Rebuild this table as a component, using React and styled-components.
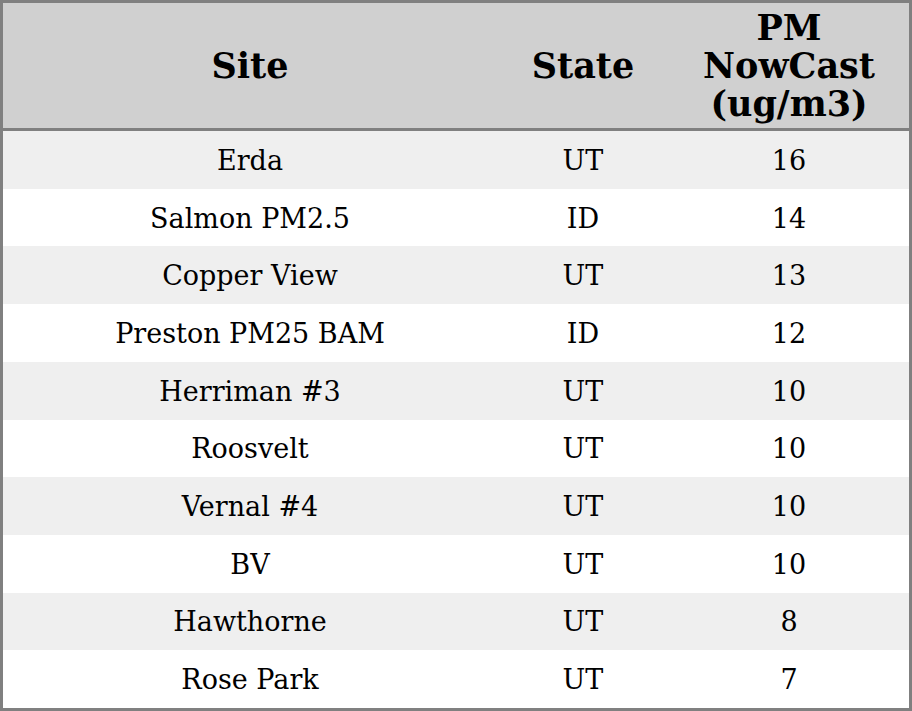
import styled, {createGlobalStyle} from 'styled-components';

const GlobalStyle = createGlobalStyle`
    html, body {
        margin: 0;
        padding: 0;
        background: #ffffff;
    }
`;

const rows = [
    {site: 'Erda', state: 'UT', value: 16},
    {site: 'Salmon PM2.5', state: 'ID', value: 14},
    {site: 'Copper View', state: 'UT', value: 13},
    {site: 'Preston PM25 BAM', state: 'ID', value: 12},
    {site: 'Herriman #3', state: 'UT', value: 10},
    {site: 'Roosvelt', state: 'UT', value: 10},
    {site: 'Vernal #4', state: 'UT', value: 10},
    {site: 'BV', state: 'UT', value: 10},
    {site: 'Hawthorne', state: 'UT', value: 8},
    {site: 'Rose Park', state: 'UT', value: 7},
];

const Table = styled.div`
    box-sizing: border-box;
    width: 912px;
    height: 711px;
    border: 3px solid #808080;
    display: flex;
    flex-direction: column;
    font-family: "DejaVu Serif", serif;
    color: #000;
`;

const Columns = `
    display: grid;
    grid-template-columns: 494px 172px 240px;
`;

const HeadRow = styled.div`
    ${Columns};
    height: 125px;
    background: #d0d0d0;
    border-bottom: 3px solid #808080;
`;

const HeadCell = styled.div`
    display: flex;
    align-items: center;
    justify-content: center;
    text-align: center;
    font-weight: bold;
    font-size: 35px;
    line-height: 38px;
    padding-top: 1px;
`;

const Body = styled.div`
    flex: 1;
    display: grid;
    grid-template-rows: repeat(10, 1fr);
`;

const Row = styled.div`
    ${Columns};
    background: ${({$odd}) => ($odd ? '#efefef' : '#ffffff')};
`;

const Cell = styled.div`
    display: flex;
    align-items: center;
    justify-content: center;
    font-size: 27px;
    padding-top: 1px;
`;

export default function App() {
    return (
        <>
            <GlobalStyle/>
            <Table>
                <HeadRow>
                    <HeadCell>Site</HeadCell>
                    <HeadCell>State</HeadCell>
                    <HeadCell>PM<br/>NowCast<br/>(ug/m3)</HeadCell>
                </HeadRow>
                <Body>
                    {rows.map((r, i) => (
                        <Row key={r.site} $odd={i % 2 === 0}>
                            <Cell>{r.site}</Cell>
                            <Cell>{r.state}</Cell>
                            <Cell>{r.value}</Cell>
                        </Row>
                    ))}
                </Body>
            </Table>
        </>
    );
}
